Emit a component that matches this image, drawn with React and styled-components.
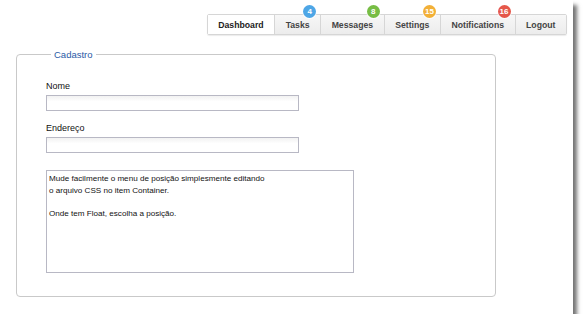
import React from 'react';
import styled, { createGlobalStyle } from 'styled-components';

const GlobalStyle = createGlobalStyle`
  html, body {
    margin: 0;
    padding: 0;
    background: #ffffff;
  }
  body {
    font-family: "Liberation Sans", Arial, sans-serif;
  }
`;

// Styled Components

const Window = styled.div`
  width: 573px;
  height: 314px;
  background: #ffffff;
  box-shadow: 4px 5px 4px rgba(0, 0, 0, 0.55);
  display: flex;
  flex-direction: column;
  box-sizing: border-box;
  padding-top: 14px;
`;

const Menu = styled.ul`
  list-style: none;
  margin: 0 6px 0 0;
  padding: 0;
  align-self: flex-end;
  display: flex;
  border: 1px solid #d6d6d6;
  border-radius: 2px;
  box-shadow: 0 1px 1px rgba(0, 0, 0, 0.08);
`;

const Tab = styled.li`
  position: relative;
  height: 19px;
  padding: 0 10.5px;
  display: flex;
  align-items: center;
  font-size: 8.7px;
  font-weight: bold;
  color: ${({ active }) => (active ? '#222' : '#444')};
  background: ${({ active }) =>
    active ? '#ffffff' : 'linear-gradient(#f7f7f7, #ececec)'};
  border-left: ${({ first }) => (first ? 'none' : '1px solid #d6d6d6')};
  cursor: pointer;
`;

const Badge = styled.span`
  position: absolute;
  top: -10px;
  right: 4px;
  min-width: 13px;
  height: 13px;
  padding: 0 1px;
  box-sizing: border-box;
  border-radius: 7px;
  font-size: 8px;
  font-weight: bold;
  line-height: 13px;
  text-align: center;
  color: #ffffff;
  background: ${({ color }) => color};
  box-shadow: 0 0 0 1px rgba(255, 255, 255, 0.8);
`;

const Fieldset = styled.fieldset`
  margin: 14px 0 0 16px;
  width: 480px;
  height: 248px;
  box-sizing: border-box;
  border: 1px solid #c9c9c9;
  border-radius: 4px;
  padding: 21px 0 0 29px;
  display: flex;
  flex-direction: column;
`;

const Legend = styled.legend`
  margin-left: 5px;
  padding: 0 3px;
  font-size: 9.5px;
  color: #2b5aa6;
`;

const Field = styled.div`
  display: flex;
  flex-direction: column;
  margin-bottom: ${({ gap }) => gap}px;
`;

const Label = styled.label`
  font-size: 9px;
  color: #111;
  margin-bottom: 3px;
  line-height: 11px;
`;

const Input = styled.input`
  width: 253px;
  height: 16px;
  box-sizing: border-box;
  border: 1px solid #b8b8c4;
  background: linear-gradient(#f2f2f2, #ffffff 40%);
  padding: 0 3px;
`;

const TextArea = styled.textarea`
  width: 308px;
  height: 103px;
  box-sizing: border-box;
  border: 1px solid #b8b8c4;
  padding: 2px 2px;
  resize: none;
  font-family: "Liberation Sans", Arial, sans-serif;
  font-size: 8.1px;
  line-height: 11.5px;
  color: #111;
`;

const tabs = [
  { name: 'Dashboard', active: true },
  { name: 'Tasks', badge: '4', color: '#4ea6e6' },
  { name: 'Messages', badge: '8', color: '#77bd45' },
  { name: 'Settings', badge: '15', color: '#f2b038' },
  { name: 'Notifications', badge: '16', color: '#e5574a' },
  { name: 'Logout' },
];

const texto =
  'Mude facilmente o menu de posição simplesmente editando\no arquivo CSS no item Container.\n\nOnde tem Float, escolha a posição.';

const App = () => {
  return (
    <>
      <GlobalStyle />
      <Window>
        <Menu>
          {tabs.map((t, i) => (
            <Tab key={t.name} active={t.active} first={i === 0}>
              {t.name}
              {t.badge && <Badge color={t.color}>{t.badge}</Badge>}
            </Tab>
          ))}
        </Menu>
        <Fieldset>
          <Legend>Cadastro</Legend>
          <Field gap={12}>
            <Label>Nome</Label>
            <Input type="text" />
          </Field>
          <Field gap={17}>
            <Label>Endereço</Label>
            <Input type="text" />
          </Field>
          <TextArea defaultValue={texto} />
        </Fieldset>
      </Window>
    </>
  );
};

export default App;
